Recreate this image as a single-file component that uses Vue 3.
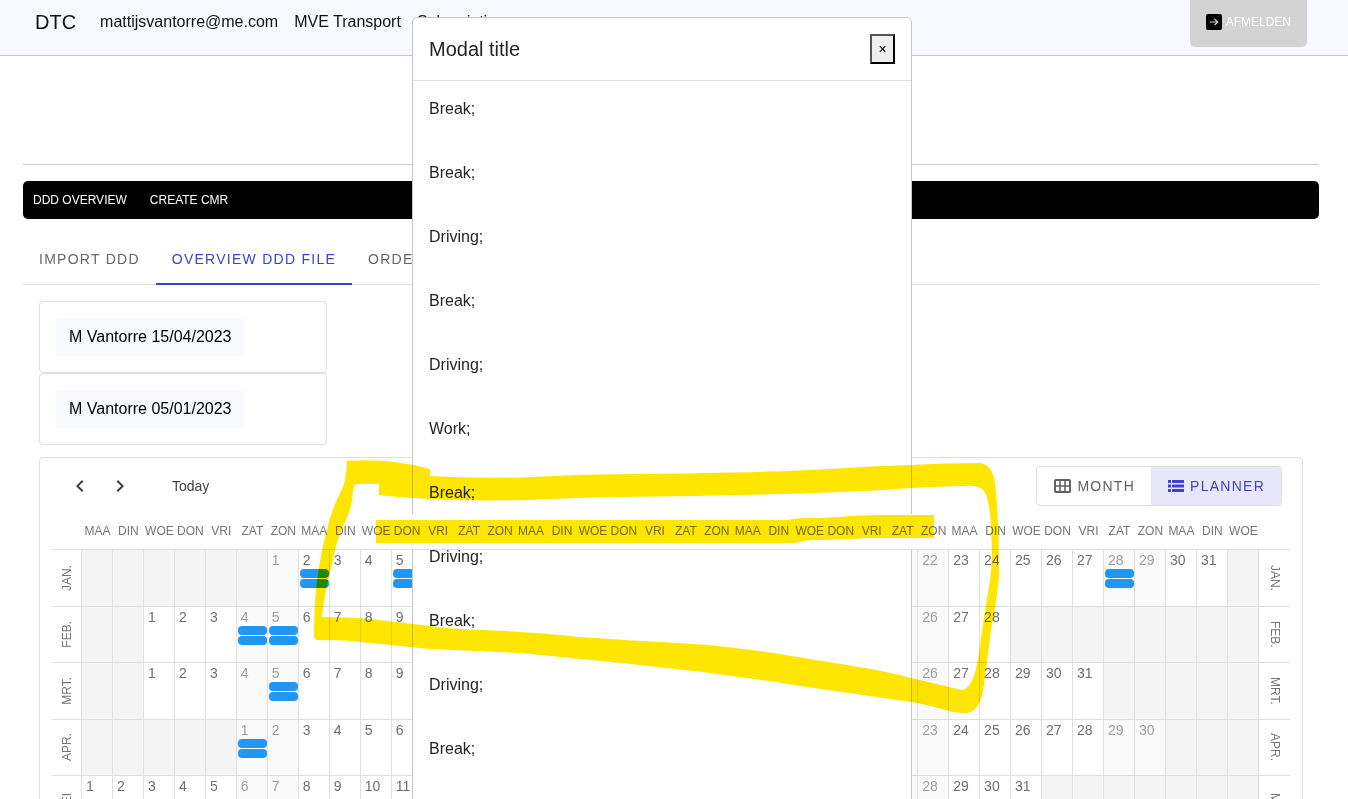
<script setup>
const weekdays = ['MAA', 'DIN', 'WOE', 'DON', 'VRI', 'ZAT', 'ZON']
const columns = Array.from({ length: 38 }, (_, i) => weekdays[i % 7])

const months = [
  { name: 'JAN.', offset: 6, days: 31, events: [2, 5, 28] },
  { name: 'FEB.', offset: 2, days: 28, events: [4, 5] },
  { name: 'MRT.', offset: 2, days: 31, events: [5] },
  { name: 'APR.', offset: 5, days: 30, events: [1] },
  { name: 'MEI', offset: 0, days: 31, events: [] },
].map((m) => ({
  name: m.name,
  cells: columns.map((_, i) => {
    const day = i - m.offset + 1
    const valid = day >= 1 && day <= m.days
    return {
      day: valid ? day : '',
      empty: !valid,
      weekend: valid && i % 7 > 4,
      busy: valid && m.events.includes(day),
    }
  }),
}))

const files = ['M Vantorre 15/04/2023', 'M Vantorre 05/01/2023']
const activities = [
  'Break;', 'Break;', 'Driving;', 'Break;', 'Driving;', 'Work;',
  'Break;', 'Driving;', 'Break;', 'Driving;', 'Break;',
]
</script>

<template>
  <div class="page">
    <header class="topbar">
      <nav class="topnav">
        <a class="brand" href="#">DTC</a>
        <a href="#">mattijsvantorre@me.com</a>
        <a href="#">MVE Transport</a>
        <a href="#">Subscriptions</a>
      </nav>
      <button class="logout" type="button">
        <svg width="16" height="16" viewBox="0 0 16 16" aria-hidden="true">
          <rect width="16" height="16" rx="2" fill="#000" />
          <path d="M4 8h7.500M8.500 4.800 11.700 8l-3.200 3.200" fill="none" stroke="#d3d3d3" stroke-width="1.200" />
        </svg>
        <span>AFMELDEN</span>
      </button>
    </header>

    <main class="content">
      <hr class="rule" />
      <nav class="menubar">
        <a href="#">DDD OVERVIEW</a>
        <a href="#">CREATE CMR</a>
      </nav>

      <div class="tabs" role="tablist">
        <button class="tab" type="button" role="tab">IMPORT DDD</button>
        <button class="tab active" type="button" role="tab" aria-selected="true">OVERVIEW DDD FILE</button>
        <button class="tab" type="button" role="tab">ORDERS</button>
      </div>

      <div class="panel">
        <div class="files">
          <div v-for="file in files" :key="file" class="file">
            <button class="chip" type="button">{{ file }}</button>
          </div>
        </div>

        <section class="calendar">
          <div class="toolbar">
            <button class="icon-button" type="button" aria-label="Previous">
              <svg width="24" height="24" viewBox="0 0 24 24"><path d="M15.400 7.400 14 6l-6 6 6 6 1.400-1.400L10.800 12z" fill="#3d3d3d" /></svg>
            </button>
            <button class="icon-button" type="button" aria-label="Next">
              <svg width="24" height="24" viewBox="0 0 24 24"><path d="M8.600 16.600 13.200 12 8.600 7.400 10 6l6 6-6 6z" fill="#3d3d3d" /></svg>
            </button>
            <button class="today" type="button">Today</button>
            <div class="views">
              <button class="view" type="button">
                <svg width="17" height="14" viewBox="0 0 17 14" aria-hidden="true">
                  <rect x="1" y="1" width="15" height="12" rx="1" fill="none" stroke="#616161" stroke-width="2" />
                  <path d="M6 1v12M11 1v12M1 7h15" stroke="#616161" stroke-width="1.600" />
                </svg>
                <span>MONTH</span>
              </button>
              <button class="view selected" type="button">
                <svg width="16" height="12" viewBox="0 0 16 12" aria-hidden="true">
                  <path d="M0 0h3v3H0zM4 0h12v3H4zM0 4.500h3v3H0zM4 4.500h12v3H4zM0 9h3v3H0zM4 9h12v3H4z" fill="#3f3fd3" />
                </svg>
                <span>PLANNER</span>
              </button>
            </div>
          </div>

          <table class="planner">
            <colgroup>
              <col class="left-col" />
              <col v-for="(_, i) in columns" :key="i" />
              <col class="right-col" />
            </colgroup>
            <thead>
              <tr>
                <th></th>
                <th v-for="(name, i) in columns" :key="i"><span>{{ name }}</span></th>
                <th></th>
              </tr>
            </thead>
            <tbody>
              <tr v-for="month in months" :key="month.name">
                <th class="month flipped"><span>{{ month.name }}</span></th>
                <td
                  v-for="(cell, i) in month.cells"
                  :key="i"
                  :class="{ empty: cell.empty, weekend: cell.weekend }"
                >
                  <div class="number">{{ cell.day }}</div>
                  <template v-if="cell.busy">
                    <div class="event"></div>
                    <div class="event"></div>
                  </template>
                </td>
                <th class="month last"><span>{{ month.name }}</span></th>
              </tr>
            </tbody>
          </table>
        </section>
      </div>
    </main>

    <div class="overlay">
      <div class="modal" role="dialog" aria-labelledby="modal-title">
        <div class="modal-header">
          <h5 id="modal-title">Modal title</h5>
          <button class="close" type="button" aria-label="Close">×</button>
        </div>
        <div class="modal-body">
          <p v-for="(activity, i) in activities" :key="i">{{ activity }}</p>
        </div>
      </div>
    </div>

    <svg class="marker" width="1348" height="799" viewBox="0 0 1348 799" aria-hidden="true">
      <path
        fill="#ffe600"
        fill-rule="evenodd"
        d="M347 461 Q390 458 430 469 V476 Q480 479 530 477 Q590 474 640 474 Q760 473 830 469 Q870 466 911 465 Q945 463 980 463 Q992 465 995 482 Q999 520 999 573 Q998 595 991 630 Q988 655 984 685 Q980 713 966 713 Q955 713 949 711 Q925 704 911 702 L800 686 Q720 673 640 665 Q560 657 520 653 L430 649 Q370 643 350 641 Q340 640 316 640 L314 637 Q314 605 317 580 Q321 550 330 518 Q334 505 343 487 Q346 480 347 461Z
           M379 484 H357 Q354 484 353 490 Q353 505 346 520 Q336 540 333 560 Q324 595 322 617 Q350 617 370 619 L430 626 Q450 629 480 630 Q535 632 580 637 L640 641 Q700 643 760 651 L853 666 Q885 671 911 678 L949 687 Q957 689 962 690 Q969 689 974 676 Q978 665 981 637 L990 580 Q993 560 991 530 Q990 495 982 489 Q978 485 962 486 Q930 487 911 488 Q875 491 840 492 Q740 496 620 497 Q590 497 530 500 Q440 502 379 495Z"
      />
      <path fill="#ffe600" d="M376 520H788Q796 518 805 518Q830 518 850 516L880 515H934V538H865Q835 540 812 540Q802 541 795 543H376Z" />
    </svg>
  </div>
</template>

<style>
body {
  margin: 0;
}
</style>

<style scoped>
.page {
  position: relative;
  height: 100vh;
  overflow: hidden;
  background: #fff;
  font-family: "Liberation Sans", Arial, sans-serif;
  font-size: 16px;
  line-height: 24px;
  color: #212529;
}
button {
  font-family: inherit;
  border: 0;
  padding: 0;
  background: none;
  cursor: pointer;
}
a {
  text-decoration: none;
}
.topbar {
  display: flex;
  justify-content: space-between;
  align-items: flex-start;
  height: 55px;
  padding: 0 41px 0 35px;
  background: #f8f9ff;
  border-bottom: 1px solid #c6c7cb;
}
.topnav {
  display: flex;
  align-items: center;
  gap: 16px;
  height: 43px;
}
.topnav a {
  color: #111;
}
.topnav .brand {
  margin-right: 8px;
  font-size: 20px;
}
.logout {
  display: flex;
  align-items: center;
  gap: 4px;
  height: 51px;
  margin-top: -4px;
  padding: 0 16px;
  border-radius: 5px;
  background: #d3d3d3;
  color: #fff;
  font-size: 12px;
}
.content {
  padding: 0 29px 0 23px;
}
.rule {
  height: 1px;
  margin: 108px 0 16px;
  border: 0;
  background: #c8c8c8;
}
.menubar {
  display: flex;
  align-items: center;
  gap: 23px;
  height: 38px;
  padding: 0 10px;
  border-radius: 5px;
  background: #000;
  font-size: 12px;
}
.menubar a {
  color: #fff;
}
.tabs {
  display: flex;
  margin-top: 16px;
  box-shadow: inset 0 -1px #dfdfdf;
}
.tab {
  height: 50px;
  padding: 0 16px;
  border-bottom: 2px solid transparent;
  font-size: 14px;
  letter-spacing: 0.09em;
  color: #666;
}
.tab.active {
  border-bottom-color: #3f3fd3;
  color: #3f3fd3;
}
.panel {
  padding: 16px 16px 0;
}
.files {
  width: 288px;
}
.file {
  padding: 16px;
  border: 1px solid #dfdfdf;
  border-radius: 4px;
}
.chip {
  display: block;
  height: 38px;
  padding: 0 13px;
  border-radius: 4px;
  background: #f8f9fc;
  font-size: 16px;
  color: #000;
}
.calendar {
  margin-top: 12px;
  padding: 8px 12px;
  border: 1px solid #dfdfdf;
  border-radius: 4px;
}
.toolbar {
  display: flex;
  align-items: center;
  height: 40px;
  margin-bottom: 8px;
  padding: 0 8px;
}
.icon-button {
  display: flex;
  align-items: center;
  justify-content: center;
  width: 40px;
  height: 40px;
}
.today {
  margin-left: 16px;
  padding: 0 16px;
  font-size: 14px;
  color: #424242;
}
.views {
  display: flex;
  margin-left: auto;
  height: 38px;
  border: 1px solid #dfdfdf;
  border-radius: 4px;
  overflow: hidden;
}
.view {
  display: flex;
  align-items: center;
  gap: 6px;
  padding: 0 16px 0 17px;
  font-size: 14px;
  letter-spacing: 0.09em;
  color: #616161;
}
.view.selected {
  background: #e8e6f9;
  color: #3f3fd3;
}
.planner {
  width: 100%;
  table-layout: fixed;
  border-collapse: separate;
  border-spacing: 0;
}
.left-col {
  width: 29px;
}
.right-col {
  width: 32px;
}
.planner th,
.planner td {
  box-sizing: border-box;
  padding: 0;
  border-bottom: 1px solid #dfdfdf;
  font-weight: normal;
}
.planner thead {
  position: relative;
  z-index: 20;
}
.planner thead th {
  height: 36px;
  padding-bottom: 2px;
  background: #fff;
  font-size: 12px;
  color: #757575;
}
.planner thead span {
  display: flex;
  justify-content: center;
  margin: 0 -4px 0 -2px;
}
.planner tbody tr {
  height: 56px;
}
.planner tbody tr:nth-child(odd) {
  height: 57px;
}
.planner td {
  border-left: 1px solid #dfdfdf;
  vertical-align: top;
}
.empty {
  background: #f4f4f4;
}
.number {
  height: 19px;
  padding-left: 4px;
  font-size: 14px;
  line-height: 21px;
  color: #6e6e6e;
}
.weekend {
  background: #fafafa;
}
.weekend .number {
  color: #9e9e9e;
}
.event {
  height: 9px;
  margin: 0 0 1px 1px;
  border-radius: 4px;
  background: #2196f3;
}
.month {
  font-size: 12px;
  line-height: 16px;
  color: #757575;
}
.month span {
  display: inline-block;
  vertical-align: middle;
  writing-mode: vertical-rl;
}
.month.flipped span {
  transform: rotate(180deg);
}
.month.last {
  border-left: 1px solid #dfdfdf;
}
.overlay {
  position: absolute;
  top: 17px;
  left: 0;
  right: 24px;
  z-index: 10;
}
.modal {
  box-sizing: border-box;
  max-width: 500px;
  margin: 0 auto;
  border: 1px solid #c6c7c9;
  border-radius: 5px;
  background: #fff;
}
.modal-header {
  display: flex;
  align-items: center;
  justify-content: space-between;
  padding: 16px;
  border-bottom: 1px solid #dee2e6;
}
.modal-header h5 {
  margin: 0;
  font-size: 20px;
  font-weight: normal;
  line-height: 30px;
}
.close {
  width: 25px;
  height: 30px;
  border: 2px outset #000;
  background: #efefef;
  font-size: 14px;
  color: #000;
}
.modal-body {
  padding: 16px;
}
.modal-body p {
  margin: 0 0 40px;
}
.marker {
  position: absolute;
  top: 0;
  left: 0;
  z-index: 30;
  mix-blend-mode: multiply;
  pointer-events: none;
}
</style>
